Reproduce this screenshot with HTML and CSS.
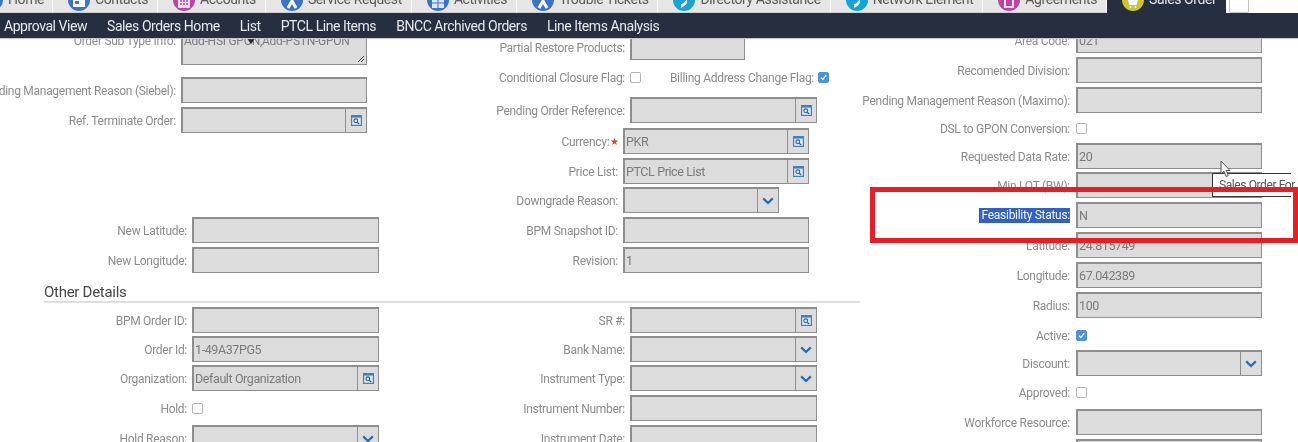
FILE: index.html
```html
<!DOCTYPE html>
<html lang="en">
<head>
<meta charset="utf-8">
<title>Sales Order</title>
<link rel="stylesheet" href="styles.css">
</head>
<body>
<svg class="defs" width="0" height="0" aria-hidden="true">
  <symbol id="pick" viewBox="0 0 11 11"><rect x="0" y="0" width="11" height="11" fill="#3f7fc4"/><rect x="1.2" y="2.6" width="8.6" height="7.2" fill="#dfeaf5"/><circle cx="4.8" cy="5.8" r="1.9" fill="none" stroke="#2f5f95" stroke-width="1.1"/><path d="M6.2 7.2 8.2 9" stroke="#2f5f95" stroke-width="1.2"/></symbol>
  <symbol id="chev" viewBox="0 0 12 8"><path d="M1.2 1.4 6 6 10.8 1.4" fill="none" stroke="#1f6fb5" stroke-width="2.2"/></symbol>
  <symbol id="tick" viewBox="0 0 11 11"><path d="M2.4 5.6 4.7 8 8.8 2.6" fill="none" stroke="#fff" stroke-width="1.6"/></symbol>
</svg>
<header class="top">
  <nav class="tabs">
    <div class="tab first"><span class="ico blue"></span><span class="tab-text">Home</span></div>
    <div class="tab"><span class="ico blue"><svg viewBox="0 0 22 22"><rect x="5" y="11" width="12" height="7" fill="#fff"/><rect x="7" y="12" width="4" height="3" fill="#3d73c4"/></svg></span><span class="tab-text">Contacts</span></div>
    <div class="tab"><span class="ico pink"><svg viewBox="0 0 22 22"><rect x="5" y="10" width="12" height="9" fill="#f2d9ec"/><path d="M7 12h2M10 12h2M13 12h2M7 15h2M10 15h2M13 15h2" stroke="#b7479f" stroke-width="1.400"/></svg></span><span class="tab-text">Accounts</span></div>
    <div class="tab"><span class="ico blue"><svg viewBox="0 0 22 22"><path d="M7 19 11 12 15 19M11 12V8" fill="none" stroke="#fff" stroke-width="3"/></svg></span><span class="tab-text">Service Request</span></div>
    <div class="tab"><span class="ico blue"><svg viewBox="0 0 22 22"><rect x="5" y="10" width="12" height="9" fill="#dbe6f5"/><path d="M11 10v9M5 14h12" stroke="#3d73c4"/></svg></span><span class="tab-text">Activities</span></div>
    <div class="tab"><span class="ico blue"><svg viewBox="0 0 22 22"><path d="M7 19 11 12 15 19M11 12V8" fill="none" stroke="#fff" stroke-width="3"/></svg></span><span class="tab-text">Trouble Tickets</span></div>
    <div class="tab"><span class="ico cyan"><svg viewBox="0 0 22 22"><path d="M8 15c3 0 3-2 6-5v4c-1 2-3 3-6 5z" fill="#fff"/></svg></span><span class="tab-text">Directory Assistance</span></div>
    <div class="tab"><span class="ico cyan"><svg viewBox="0 0 22 22"><path d="M8 15c3 0 3-2 6-5v4c-1 2-3 3-6 5z" fill="#fff"/></svg></span><span class="tab-text">Network Element</span></div>
    <div class="tab"><span class="ico pink"><svg viewBox="0 0 22 22"><rect x="6" y="9" width="10" height="10" fill="#f2d9ec"/><rect x="8" y="11" width="6" height="6" fill="#b7479f"/></svg></span><span class="tab-text">Agreements</span></div>
    <div class="tab active"><span class="ico yellow"><svg viewBox="0 0 22 22"><path d="M6 11h10l-1.400 5H7.400z" fill="#fff"/><circle cx="8.500" cy="18" r="1" fill="#fff"/><circle cx="13.500" cy="18" r="1" fill="#fff"/></svg></span><span class="tab-text">Sales Order</span></div>
    <div class="tab-more"></div>
  </nav>
  <nav class="menu">
    <span>Approval View</span>
    <span>Sales Orders Home</span>
    <span>List</span>
    <span>PTCL Line Items</span>
    <span>BNCC Archived Orders</span>
    <span>Line Items Analysis</span>
  </nav>
</header>

<main class="form">
  <div class="left">
    <div class="two">
      <div class="col c1">
        <div class="row l176 at30">
          <label>Order Sub Type Info:</label>
          <div class="field area">Add-HSI GPON,Add-PSTN-GPON<span class="blot"></span>
            <svg class="grip" viewBox="0 0 8 8"><path d="M1 7 7 1M4 7 7 4" stroke="#444" stroke-width="1"/></svg>
          </div>
        </div>
        <div class="row l176 g12"><label>Pending Management Reason (Siebel):</label><div class="field"></div></div>
        <div class="row l176"><label>Ref. Terminate Order:</label><div class="field pick"><span class="val"></span><span class="btn"><svg class="i-pick"><use href="#pick"/></svg></span></div></div>
        <div class="row l187 g84"><label>New Latitude:</label><div class="field w187"></div></div>
        <div class="row l187"><label>New Longitude:</label><div class="field w187"></div></div>
      </div>
      <div class="col c2">
        <div class="row l225 at34"><label>Partial Restore Products:</label><div class="field w115"></div></div>
        <div class="row l225 flag">
          <label>Conditional Closure Flag:</label><span class="check"></span>
          <label class="second">Billing Address Change Flag:</label><span class="check on"><svg><use href="#tick"/></svg></span>
        </div>
        <div class="row l225 g7"><label>Pending Order Reference:</label><div class="field w187 pick"><span class="val"></span><span class="btn"><svg class="i-pick"><use href="#pick"/></svg></span></div></div>
        <div class="row l218 g5"><label>Currency:<span class="req">★</span></label><div class="field pick"><span class="val">PKR</span><span class="btn"><svg class="i-pick"><use href="#pick"/></svg></span></div></div>
        <div class="row l218"><label>Price List:</label><div class="field pick"><span class="val">PTCL Price List</span><span class="btn"><svg class="i-pick"><use href="#pick"/></svg></span></div></div>
        <div class="row l218 g3"><label>Downgrade Reason:</label><div class="field w156 pick"><span class="val"></span><span class="btn"><svg class="i-chev"><use href="#chev"/></svg></span></div></div>
        <div class="row l218"><label>BPM Snapshot ID:</label><div class="field"></div></div>
        <div class="row l218"><label>Revision:</label><div class="field">1</div></div>
      </div>
    </div>
    <h2 class="section">Other Details</h2>
    <div class="two">
      <div class="col c1">
        <div class="row l187"><label>BPM Order ID:</label><div class="field w187"></div></div>
        <div class="row l187 g3"><label>Order Id:</label><div class="field w187 tall">1-49A37PG5</div></div>
        <div class="row l187 g3"><label>Organization:</label><div class="field w187 pick"><span class="val">Default Organization</span><span class="btn"><svg class="i-pick"><use href="#pick"/></svg></span></div></div>
        <div class="row l187"><label>Hold:</label><span class="check"></span></div>
        <div class="row l187"><label>Hold Reason:</label><div class="field w187 pick"><span class="val"></span><span class="btn"><svg class="i-chev"><use href="#chev"/></svg></span></div></div>
      </div>
      <div class="col c2">
        <div class="row l225"><label>SR #:</label><div class="field w187 pick"><span class="val"></span><span class="btn"><svg class="i-pick"><use href="#pick"/></svg></span></div></div>
        <div class="row l225 g3"><label>Bank Name:</label><div class="field w187 pick"><span class="val"></span><span class="btn"><svg class="i-chev"><use href="#chev"/></svg></span></div></div>
        <div class="row l225 g3"><label>Instrument Type:</label><div class="field w187 pick"><span class="val"></span><span class="btn"><svg class="i-chev"><use href="#chev"/></svg></span></div></div>
        <div class="row l225"><label>Instrument Number:</label><div class="field w187"></div></div>
        <div class="row l225"><label>Instrument Date:</label><div class="field w187"></div></div>
      </div>
    </div>
  </div>
  <div class="col c3">
    <div class="row l210 at27"><label>Area Code:</label><div class="field">021</div></div>
    <div class="row l210"><label>Recomended Division:</label><div class="field"></div></div>
    <div class="row l210"><label>Pending Management Reason (Maximo):</label><div class="field"></div></div>
    <div class="row l210 short"><label>DSL to GPON Conversion:</label><span class="check"></span></div>
    <div class="row l210 g2"><label>Requested Data Rate:</label><div class="field tall">20</div></div>
    <div class="row l210 g3"><label>Min LOT (BW):</label><div class="field"></div></div>
    <div class="row l210"><label><span class="sel">Feasibility Status:</span></label><div class="field">N</div></div>
    <div class="row l210"><label>Latitude:</label><div class="field">24.815749</div></div>
    <div class="row l210"><label>Longitude:</label><div class="field">67.042389</div></div>
    <div class="row l210"><label>Radius:</label><div class="field">100</div></div>
    <div class="row l210"><label>Active:</label><span class="check on"><svg><use href="#tick"/></svg></span></div>
    <div class="row l210 g2"><label>Discount:</label><div class="field pick"><span class="val"></span><span class="btn"><svg class="i-chev"><use href="#chev"/></svg></span></div></div>
    <div class="row l210 g3"><label>Approved:</label><span class="check"></span></div>
    <div class="row l210"><label>Workforce Resource:</label><div class="field"></div></div>
    <div class="row l210"><label></label><div class="field"></div></div>
  </div>
</main>

<svg class="cursor" viewBox="0 0 11 18"><path d="M1 1V14L4 11.300 6 16.500 8.300 15.500 6.200 10.500H10Z" fill="#f4f4f4" stroke="#555" stroke-width="1"/></svg>
<div class="tooltip">Sales Order For</div>
<div class="callout"></div>
</body>
</html>
```
FILE: styles.css
```css
* { box-sizing: border-box; }
html, body { margin: 0; height: 442px; overflow: hidden; background: #fff; }
body { position: relative; width: 1298px; font-family: Roboto, "Liberation Sans", sans-serif; filter: blur(0.35px); }
.defs { position: absolute; }

/* header */
.top { position: relative; z-index: 2; height: 38px; }
.tabs { display: flex; height: 13px; overflow: hidden; background: #fff; }
.tab { display: flex; align-items: center; gap: 5px; height: 13px; padding: 0 9px 0 15px; background: #e6e6e6; border-right: 1px solid #fbfbfb; border-bottom: 1px solid #cfcfcf; font-size: 14px; letter-spacing: -.4px; color: #5a5a5a; white-space: nowrap; }
.tab.first { margin-left: -34px; padding-right: 8px; }
.tab.active { background: #262f3f; color: #e6e8ec; border-color: #262f3f; }
.tab-text { transform: translateY(-7px); }
.ico { width: 22px; height: 22px; flex: none; border-radius: 50%; align-self: flex-start; margin-top: -11px; overflow: hidden; }
.ico svg { display: block; width: 22px; height: 22px; }
.blue { background: #3d73c4; }
.pink { background: #b7479f; }
.cyan { background: #16a4d4; }
.yellow { background: #c9c632; }
.tab-more { width: 20px; height: 13px; margin-left: 3px; background: #fff; border: 1px solid #c4c4c4; border-top: 0; border-radius: 0 0 2px 2px; }
.menu { display: flex; align-items: center; gap: 20px; height: 25px; padding-left: 4px; background: #262f3f; color: #e6e9ee; font-size: 14px; letter-spacing: -.44px; white-space: nowrap; box-shadow: 0 1px 1px #c8c8c8; }

/* form */
.form { display: grid; grid-template-columns: 860px 438px; margin-top: -26px; height: 430px; overflow: hidden; font-size: 12px; letter-spacing: -.28px; color: #8c8c8c; }
.two { display: grid; grid-template-columns: 400px 460px; }
.col { display: flex; flex-direction: column; }
.row { display: flex; align-items: center; gap: 5px; height: 26px; margin-top: 4px; flex: none; }
.row label { display: flex; justify-content: flex-end; flex: none; padding-top: 1px; white-space: nowrap; }
.l176 label { width: 176px; }
.l187 label { width: 187px; }
.l225 label { width: 225px; }
.l218 label { width: 218px; }
.l210 { gap: 6px; }
.l210 label { width: 210px; }
.at27 { margin-top: 15px; height: 26px; }
.at30 { margin-top: 18px; height: 35px; }
.at30 label { align-self: flex-start; padding-top: 4px; }
.at34 { margin-top: 22px; }
.g2 { margin-top: 2px; }
.g3 { margin-top: 3px; }
.g5 { margin-top: 5px; }
.g7 { margin-top: 7px; }
.g12 { margin-top: 12px; }
.g84 { margin-top: 84px; }
.short { margin-top: 2px; }
.tall { height: 27px; }

.field { position: relative; display: flex; align-items: center; flex: none; width: 186px; height: 26px; padding: 0 1px; background: #dcdcdc; border: 1px solid #8e8e8e; border-top-width: 2px; border-left-width: 2px; font-size: 12.5px; letter-spacing: -.4px; color: #7a7a7a; white-space: nowrap; }
.w115 { width: 115px; }
.w156 { width: 156px; }
.w187 { width: 187px; }
.area { align-items: flex-start; height: 35px; padding-top: 2px; font-size: 12px; letter-spacing: -.27px; }
.blot { position: absolute; left: 63px; top: 5px; border: 5px solid transparent; border-top: 7px solid #222; }
.grip { position: absolute; right: 1px; bottom: 1px; width: 8px; height: 8px; }
.pick { padding: 0; }
.val { flex: 1; padding-left: 1px; }
.btn { display: flex; align-items: center; justify-content: center; flex: none; width: 21px; height: 100%; border-left: 1px solid #8e8e8e; }
.i-pick { width: 11px; height: 11px; }
.i-chev { width: 12px; height: 8px; }
.check { flex: none; width: 11px; height: 11px; background: #fff; border: 1px solid #b4b4b4; border-radius: 2px; }
.check.on { background: #4b93dc; border-color: #4b93dc; }
.check svg { display: block; width: 9px; height: 9px; }
.flag label.second { width: 168px; margin-right: -1px; }
.req { color: #d0432c; font-size: 10px; margin-left: 1px; margin-right: -1px; align-self: center; }
.sel { padding: 0 0 0 3px; background: #2f60cf; color: #f4f6fb; line-height: 15px; }

.section { grid-column: 1; height: 30px; margin: 0 0 0 44px; padding-top: 10px; border-bottom: 2px solid #dedede; font-size: 15px; font-weight: 400; line-height: 19px; color: #484848; }

/* overlays */
.cursor { position: absolute; left: 1220px; top: 160px; width: 11px; height: 18px; z-index: 4; }
.tooltip { position: absolute; left: 1212px; top: 173px; width: 79px; height: 24px; padding: 4px 0 0 6px; background: #fff; border: 1px solid #333; border-right: 0; font-size: 12px; letter-spacing: -.4px; color: #555; white-space: nowrap; z-index: 3; }
.callout { position: absolute; left: 870px; top: 187px; width: 428px; height: 56px; border: 5px solid #ec1c24; z-index: 5; }
```
